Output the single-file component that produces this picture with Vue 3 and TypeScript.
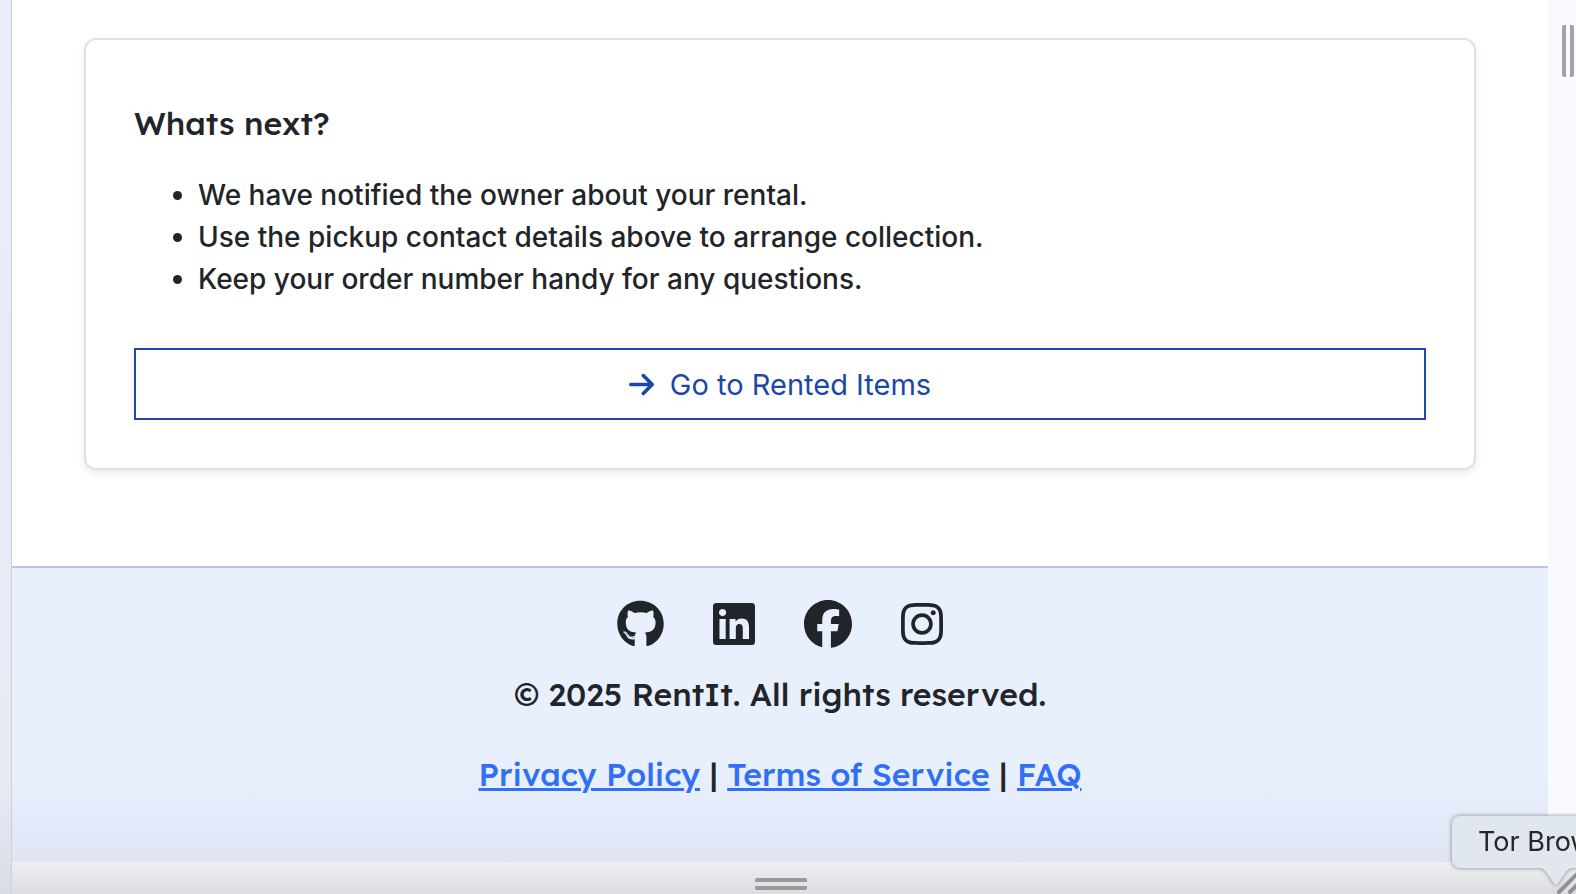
<script setup lang="ts">
interface SocialLink {
  name: string
  viewBox: string
  width: number
  path: string
}

const steps: string[] = [
  'We have notified the owner about your rental.',
  'Use the pickup contact details above to arrange collection.',
  'Keep your order number handy for any questions.',
]

const socials: SocialLink[] = [
  {
    name: 'GitHub',
    viewBox: '0 0 496 512',
    width: 47,
    path: 'M165.9 397.4c0 2-2.3 3.6-5.2 3.6-3.3.3-5.6-1.3-5.6-3.6 0-2 2.3-3.6 5.2-3.6 3-.3 5.6 1.3 5.6 3.6zm-31.1-4.5c-.7 2 1.3 4.3 4.3 4.9 2.6 1 5.6 0 6.2-2s-1.3-4.3-4.3-5.2c-2.6-.7-5.5.3-6.2 2.3zm44.2-1.7c-2.9.7-4.9 2.6-4.6 4.9.3 2 2.9 3.3 5.9 2.6 2.9-.7 4.9-2.6 4.6-4.6-.3-1.9-3-3.2-5.9-2.9zM244.8 8C106.1 8 0 113.3 0 252c0 110.9 69.8 205.8 169.5 239.2 12.8 2.3 17.3-5.6 17.3-12.1 0-6.2-.3-40.4-.3-61.4 0 0-70 15-84.7-29.8 0 0-11.4-29.1-27.8-36.6 0 0-22.9-15.7 1.6-15.4 0 0 24.9 2 38.6 25.8 21.9 38.6 58.6 27.5 72.9 20.9 2.3-16 8.8-27.1 16-33.7-55.9-6.2-112.3-14.3-112.3-110.5 0-27.5 7.6-41.3 23.6-58.9-2.6-6.5-11.1-33.3 2.6-67.9 20.9-6.5 69 27 69 27 20-5.6 41.5-8.5 62.8-8.5s42.8 2.9 62.8 8.5c0 0 48.1-33.6 69-27 13.7 34.7 5.2 61.4 2.6 67.9 16 17.7 25.8 31.5 25.8 58.9 0 96.5-58.9 104.2-114.8 110.5 9.2 7.9 17 22.9 17 46.4 0 33.7-.3 75.4-.3 83.6 0 6.5 4.6 14.4 17.3 12.1C428.2 457.8 496 362.9 496 252 496 113.3 383.5 8 244.8 8zM97.2 352.9c-1.3 1-1 3.3.7 5.2 1.6 1.6 3.9 2.3 5.2 1 1.3-1 1-3.3-.7-5.2-1.6-1.6-3.9-2.3-5.2-1zm-10.8-8.1c-.7 1.3.3 2.9 2.3 3.9 1.6 1 3.6.7 4.3-.7.7-1.3-.3-2.9-2.3-3.9-2-.6-3.6-.3-4.3.7zm32.4 35.6c-1.6 1.3-1 4.3 1.3 6.2 2.3 2.3 5.2 2.6 6.5 1 1.3-1.3.7-4.3-1.3-6.2-2.2-2.3-5.2-2.6-6.5-1zm-11.4-14.7c-1.6 1-1.6 3.6 0 5.9 1.6 2.3 4.3 3.3 5.6 2.3 1.6-1.3 1.6-3.9 0-6.2-1.4-2.3-4-3.3-5.6-2z',
  },
  {
    name: 'LinkedIn',
    viewBox: '0 0 448 512',
    width: 42,
    path: 'M416 32H31.9C14.3 32 0 46.5 0 64.3v383.4C0 465.5 14.3 480 31.9 480H416c17.6 0 32-14.5 32-32.3V64.3c0-17.8-14.4-32.3-32-32.3zM135.4 416H69V202.2h66.5V416zm-33.2-243c-21.3 0-38.5-17.3-38.5-38.5S80.9 96 102.2 96c21.2 0 38.5 17.3 38.5 38.5 0 21.3-17.2 38.5-38.5 38.5zm282.1 243h-66.4V312c0-24.8-.5-56.7-34.5-56.7-34.6 0-39.9 27-39.9 54.9V416h-66.4V202.2h63.7v29.2h.9c8.9-16.8 30.6-34.5 62.9-34.5 67.2 0 79.7 44.3 79.7 101.9V416z',
  },
  {
    name: 'Facebook',
    viewBox: '0 0 512 512',
    width: 48,
    path: 'M512 256C512 114.6 397.4 0 256 0S0 114.6 0 256C0 376 82.7 476.8 194.2 504.5V334.2H141.4V256h52.8V222.3c0-87.1 39.4-127.5 125-127.5c16.2 0 44.2 3.2 55.7 6.4V172c-6-.6-16.5-1-29.6-1c-42 0-58.2 15.9-58.2 57.2V256h83.6l-14.4 78.2H287V510.1C413.8 494.8 512 386.9 512 256z',
  },
  {
    name: 'Instagram',
    viewBox: '0 0 448 512',
    width: 42,
    path: 'M224.1 141c-63.6 0-114.9 51.3-114.9 114.9s51.3 114.9 114.9 114.9S339 319.5 339 255.9 287.7 141 224.1 141zm0 189.6c-41.1 0-74.7-33.5-74.7-74.7s33.5-74.7 74.7-74.7 74.7 33.5 74.7 74.7-33.6 74.7-74.7 74.7zm146.4-194.3c0 14.9-12 26.8-26.8 26.8-14.9 0-26.8-12-26.8-26.8s12-26.8 26.8-26.8 26.8 12 26.8 26.8zm76.1 27.2c-1.7-35.9-9.9-67.7-36.2-93.9-26.2-26.2-58-34.4-93.9-36.2-37-2.1-147.9-2.1-184.9 0-35.8 1.7-67.6 9.9-93.9 36.1s-34.4 58-36.2 93.9c-2.1 37-2.1 147.9 0 184.9 1.7 35.9 9.9 67.7 36.2 93.9s58 34.4 93.9 36.2c37 2.1 147.9 2.1 184.9 0 35.9-1.7 67.7-9.9 93.9-36.2 26.2-26.2 34.4-58 36.2-93.9 2.1-37 2.1-147.8 0-184.8zM398.8 388c-7.8 19.6-22.9 34.7-42.6 42.6-29.5 11.7-99.5 9-132.1 9s-102.7 2.6-132.1-9c-19.6-7.8-34.7-22.9-42.6-42.6-11.7-29.5-9-99.5-9-132.1s-2.6-102.7 9-132.1c7.8-19.6 22.9-34.7 42.6-42.6 29.5-11.7 99.5-9 132.1-9s102.7-2.6 132.1 9c19.6 7.8 34.7 22.9 42.6 42.6 11.7 29.5 9 99.5 9 132.1s2.7 102.7-9 132.1z',
  },
]
</script>

<template>
  <div class="device">
    <div class="edge-left"></div>

    <div class="page">
      <main class="content">
        <section class="card">
          <h2 class="title">Whats next?</h2>
          <ul class="steps">
            <li v-for="step in steps" :key="step">{{ step }}</li>
          </ul>
          <a class="action" href="#rented-items">
            <svg class="arrow" viewBox="0 0 448 512" aria-hidden="true">
              <path
                d="M438.6 278.6c12.5-12.5 12.5-32.8 0-45.3l-160-160c-12.5-12.5-32.8-12.5-45.3 0s-12.5 32.8 0 45.3L338.8 224 32 224c-17.7 0-32 14.3-32 32s14.3 32 32 32l306.7 0L233.4 393.4c-12.5 12.5-12.5 32.8 0 45.3s32.8 12.5 45.3 0l160-160z"
              />
            </svg>
            Go to Rented Items
          </a>
        </section>
      </main>

      <footer class="footer">
        <nav class="socials" aria-label="Social media">
          <a v-for="s in socials" :key="s.name" class="social" href="#" :aria-label="s.name">
            <svg :viewBox="s.viewBox" :width="s.width" height="48" aria-hidden="true">
              <path :d="s.path" />
            </svg>
          </a>
        </nav>
        <p class="line">© 2025 RentIt. All rights reserved.</p>
        <p class="line">
          <a href="#privacy">Privacy Policy</a> | <a href="#terms">Terms of Service</a> |
          <a href="#faq">FAQ</a>
        </p>
      </footer>
    </div>

    <div class="edge-right">
      <span class="grip grip-vertical"></span>
    </div>

    <div class="edge-bottom">
      <span class="grip grip-horizontal"></span>
    </div>

    <svg class="corner" viewBox="0 0 20 28" aria-hidden="true">
      <path d="M3 26 29 0M14 26 40 0" />
    </svg>
    <div class="tooltip" role="tooltip">
      Tor Browser
      <svg class="tail" viewBox="0 0 32 20" aria-hidden="true">
        <path d="M0 0C5 1 7 5 13 14Q16 19 19 14C25 5 27 1 32 0Z" />
      </svg>
    </div>
  </div>
</template>

<style>
body {
  margin: 0;
}
</style>

<style scoped>
.device {
  position: relative;
  display: grid;
  grid-template: 1fr 32px / 12px 1fr 28px;
  min-height: 100vh;
  overflow: hidden;
  background: #fff;
  color: #212529;
  font-family: Inter, 'Liberation Sans', sans-serif;
}

.edge-left {
  grid-row: 1 / 3;
  box-sizing: border-box;
  border-right: 1px solid #cfd0d6;
  background: linear-gradient(#e9edf8 0%, #e7eaf3 88%, #d7dce5 100%);
}

.page {
  display: flex;
  flex-direction: column;
}

.content {
  padding: 38px 72px 96px;
}

.card {
  padding: 48px;
  border: 2px solid #dfe0e6;
  border-radius: 12px;
  box-shadow: 0 4px 8px rgb(0 0 0 / 8%);
}

.title,
.line {
  font-family: Lexend, Inter, 'Liberation Sans', sans-serif;
  font-size: 32px;
  font-weight: 500;
}

.title {
  margin: 16px 0 32px;
  line-height: 38px;
}

.steps {
  margin: 0 0 48px;
  padding-left: 64px;
  font-size: 28px;
  font-weight: 500;
  line-height: 42px;
}

.action {
  display: flex;
  align-items: center;
  justify-content: center;
  gap: 16px;
  height: 68px;
  border: 2px solid #1a47a8;
  color: #1a47a8;
  font-size: 29px;
  text-decoration: none;
}

.arrow {
  width: 25px;
  height: 29px;
  fill: currentColor;
}

.footer {
  flex: 1;
  padding-top: 32px;
  border-top: 2px solid #b9c4e3;
  background: linear-gradient(#e8effd 0%, #e8effd 70%, #dfe5f4 100%);
  text-align: center;
}

.socials {
  display: flex;
  justify-content: center;
  gap: 49px;
  margin-bottom: 22px;
}

.social {
  display: flex;
  color: #212529;
}

.social svg {
  fill: currentColor;
}

.line {
  margin: 0 0 32px;
  line-height: 48px;
}

.line a {
  color: #316ff6;
  text-decoration-thickness: 3px;
}

.edge-right {
  display: flex;
  justify-content: flex-end;
  padding: 25px 2px 0 0;
  background: #f8faff;
}

.edge-bottom {
  grid-column: 2 / 4;
  display: flex;
  justify-content: center;
  padding: 16px 26px 0 0;
  background: linear-gradient(#eff0f2, #dcdde1);
}

.grip {
  box-sizing: border-box;
  border: 0 solid #a3a3a3;
}

.grip-vertical {
  width: 12px;
  height: 52px;
  border-width: 0 4px;
  border-radius: 2px;
}

.grip-horizontal {
  width: 52px;
  height: 12px;
  border-width: 4px 0;
  border-color: #999;
  border-radius: 2px;
}

.corner {
  position: absolute;
  right: 0;
  bottom: 0;
  width: 20px;
  height: 28px;
  fill: none;
  stroke: #8f9092;
  stroke-linecap: round;
  stroke-width: 4;
}

.tooltip {
  position: absolute;
  right: -76px;
  bottom: 26px;
  width: 174px;
  padding-left: 26px;
  border-radius: 8px;
  background: #e1e7ef;
  color: #242628;
  filter: drop-shadow(0 0 2px rgb(0 0 0 / 45%));
  font-family: Inter, 'Liberation Sans', sans-serif;
  font-size: 27px;
  line-height: 52px;
  white-space: nowrap;
}

.tail {
  position: absolute;
  top: 100%;
  left: 88px;
  width: 32px;
  height: 20px;
  fill: #e1e7ef;
}
</style>
